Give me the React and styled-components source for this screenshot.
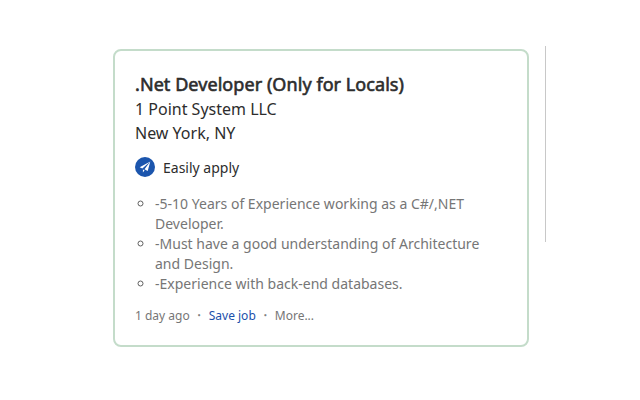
import React from "react";
import styled, { createGlobalStyle } from "styled-components";

const GlobalStyle = createGlobalStyle`
  * { box-sizing: border-box; }
  body { margin: 0; background: #fff; font-family: "Noto Sans", sans-serif; color: #2d2d2d; }
`;
const Page = styled.main`
  display: flex;
  height: 400px;
  padding-left: 113px;
  overflow: hidden;
`;
const Card = styled.article`
  width: 416px;
  height: 298px;
  margin-top: 49px;
  padding: 21px 20px 0;
  border: 2px solid #c4dcca;
  border-radius: 8px;
`;
const Divider = styled.div`
  width: 1px;
  height: 196px;
  margin: 46px 0 0 16px;
  background: #c8c8c8;
`;
const Title = styled.h2`
  margin: 0 0 1px;
  font-size: 18px;
  line-height: 24px;
  font-weight: 400;
  letter-spacing: 0.065px;
  -webkit-text-stroke: 0.6px currentColor;
`;
const Detail = styled.div`
  font-size: 16px;
  line-height: 24px;
`;
const Apply = styled.div`
  display: flex;
  align-items: center;
  gap: 8px;
  height: 20px;
  margin-top: 12px;
  font-size: 14px;
`;
const Summary = styled.ul`
  margin: 17px 0 0;
  padding: 0 0 0 20px;
  list-style: circle;
  color: #767676;
  font-size: 14px;
  line-height: 20px;
  letter-spacing: 0.01px;

  li::marker {
    color: #606060;
  }
`;
const Footer = styled.footer`
  display: flex;
  margin-top: 12px;
  font-size: 12px;
  line-height: 20px;
  color: #767676;
`;
const Dot = styled.span`
  width: 19px;
  text-align: center;
  -webkit-text-stroke: 0.4px currentColor;
`;
const SaveLink = styled.a`
  color: #1a50ab;
`;

export default function App() {
  return (
    <>
      <GlobalStyle />
      <Page>
        <Card>
          <Title>.Net Developer (Only for Locals)</Title>
          <Detail>1 Point System LLC</Detail>
          <Detail>New York, NY</Detail>
          <Apply>
            <svg width="20" height="20" viewBox="0 0 20 20">
              <circle cx="10" cy="10" r="10" fill="#1b55ad" />
              <path d="M15.3 4.6 4.7 10.2l2.6 1.4zM15.3 4.6 9.5 12.2l3.2 1.8zM7.9 12.4v3l1.7-2.1z" fill="#fff" />
            </svg>
            <span>Easily apply</span>
          </Apply>
          <Summary>
            <li>-5-10 Years of Experience working as a C#/,NET Developer.</li>
            <li>-Must have a good understanding of Architecture and Design.</li>
            <li>-Experience with back-end databases.</li>
          </Summary>
          <Footer>
            <span>1 day ago</span>
            <Dot>·</Dot>
            <SaveLink>Save job</SaveLink>
            <Dot>·</Dot>
            <span>More...</span>
          </Footer>
        </Card>
        <Divider />
      </Page>
    </>
  );
}
